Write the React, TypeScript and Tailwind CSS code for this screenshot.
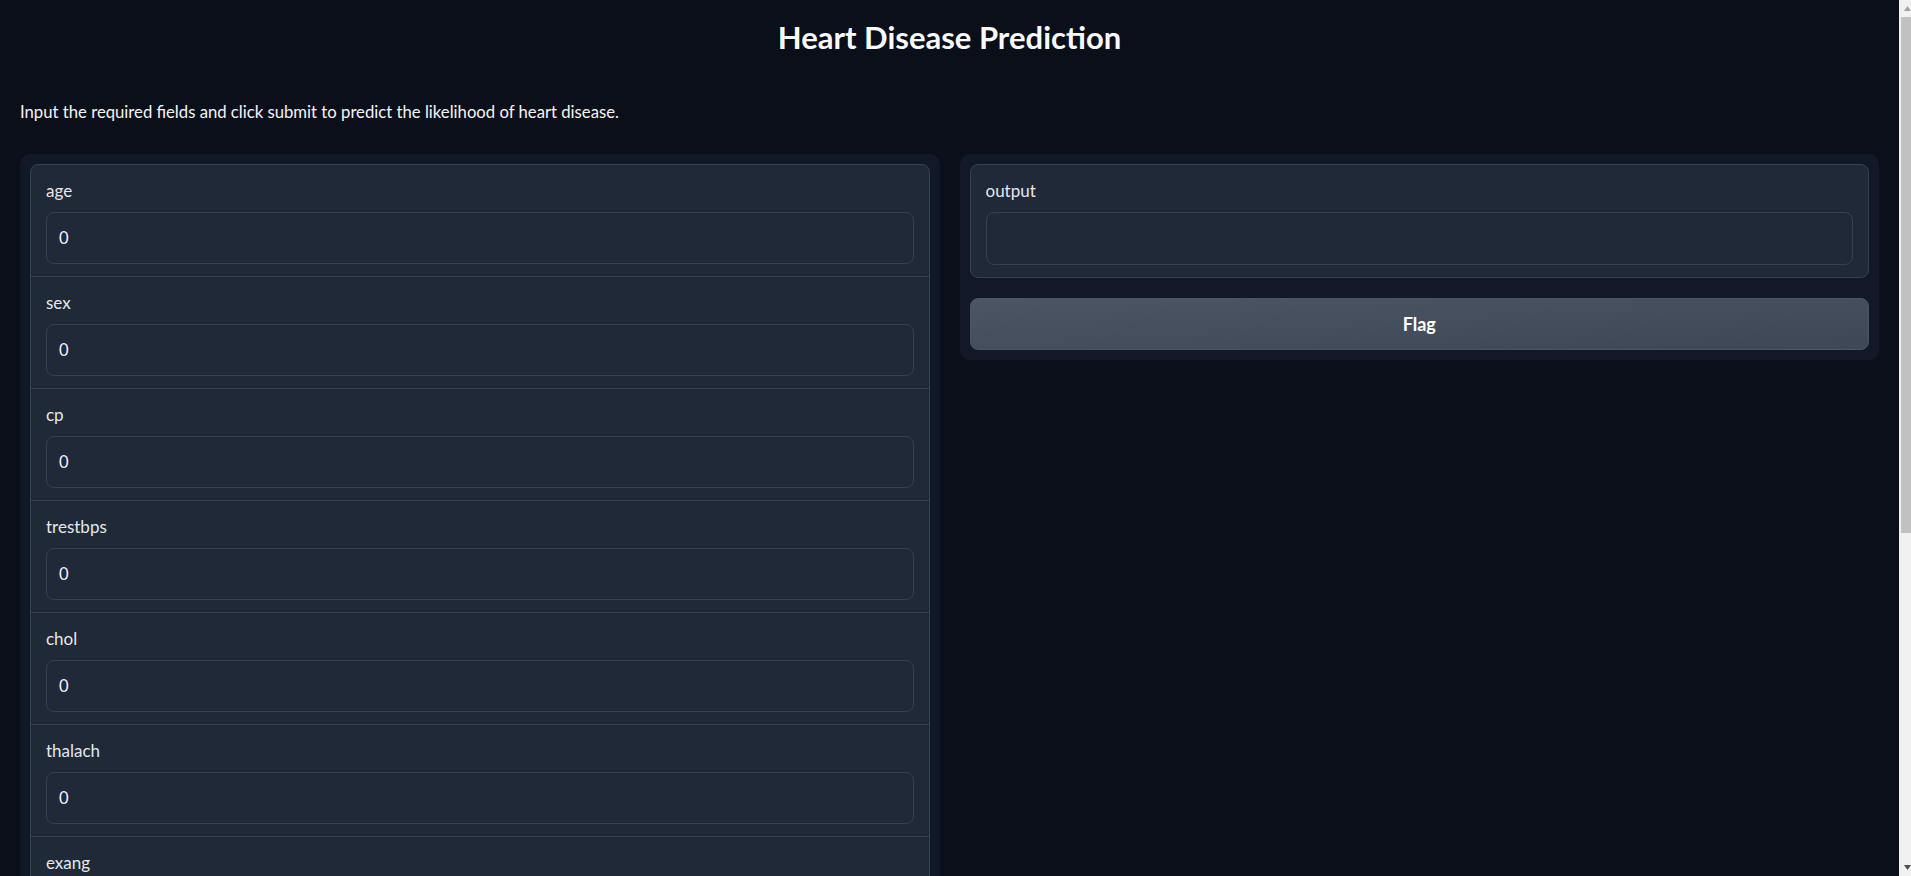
import { useState } from "react"

const FIELDS = ["age", "sex", "cp", "trestbps", "chol", "thalach", "exang", "oldpeak", "slope", "ca"]

function NumberField({ label }: { label: string }) {
  const [value, setValue] = useState("0")
  return (
    <label className="flex flex-col bg-[#1f2937] px-[15px] pt-[14px] pb-[12px]">
      <span className="mb-[9px] text-[17px] leading-6 text-[#e5e7eb]">{label}</span>
      <input
        type="number"
        value={value}
        onChange={(e) => setValue(e.target.value)}
        className="h-[52px] w-full rounded-lg border border-[#374151] bg-[#1f2937] px-3 text-[16.5px] text-[#f3f4f6] outline-none focus:border-[#4b5563] [appearance:textfield] [&::-webkit-inner-spin-button]:appearance-none"
      />
    </label>
  )
}

function Scrollbar() {
  return (
    <div className="flex w-[12px] shrink-0 flex-col bg-[#f1f1f1]">
      <div className="flex h-[17px] items-center justify-end">
        <svg width="7" height="5" viewBox="0 0 7 5">
          <path d="M0 5 L3.5 0 L7 5 Z" fill="#a3a3a3" />
        </svg>
      </div>
      <div className="flex-1">
        <div className="ml-[2px] h-[516px] bg-[#c1c1c1]" />
      </div>
      <div className="flex h-[17px] items-center justify-end">
        <svg width="7" height="5" viewBox="0 0 7 5">
          <path d="M0 0 L7 0 L3.5 5 Z" fill="#505050" />
        </svg>
      </div>
    </div>
  )
}

export default function App() {
  return (
    <div className="flex h-screen bg-[#0b0f19] font-[Lato,sans-serif]">
      <div className="flex-1 overflow-y-auto [scrollbar-width:none]">
        <main className="px-5 pb-10">
          <h1 className="pt-[17px] text-center text-[31px] font-bold leading-10 text-[#f9fafb]">
            Heart Disease Prediction
          </h1>
          <p className="mt-[43px] text-[16.7px] leading-6 text-[#f3f4f6]">
            Input the required fields and click submit to predict the likelihood of heart disease.
          </p>

          <div className="mt-[30px] flex items-start gap-5">
            {/* inputs */}
            <div className="flex flex-1 flex-col gap-5 rounded-[10px] bg-[#111827] p-[10px]">
              <div className="flex flex-col gap-px overflow-hidden rounded-lg border border-[#374151] bg-[#374151]">
                {FIELDS.map((f) => (
                  <NumberField key={f} label={f} />
                ))}
              </div>
              <div className="flex gap-4">
                <button className="h-[52px] flex-1 rounded-lg border border-[#4b5563] bg-gradient-to-br from-[#4b5563] to-[#3f4756] text-[18px] font-bold text-white">
                  Clear
                </button>
                <button className="h-[52px] flex-1 rounded-lg border border-[#f97316] bg-gradient-to-br from-[#f97316] to-[#c2410c] text-[18px] font-bold text-white">
                  Submit
                </button>
              </div>
            </div>

            {/* output */}
            <div className="flex flex-1 flex-col gap-5 rounded-[10px] bg-[#111827] p-[10px]">
              <div className="flex flex-col rounded-lg border border-[#374151] bg-[#1f2937] px-[15px] pt-[14px] pb-[12px]">
                <span className="mb-[9px] text-[17px] leading-6 text-[#e5e7eb]">output</span>
                <textarea
                  readOnly
                  rows={1}
                  className="h-[53px] w-full resize-none rounded-lg border border-[#374151] bg-[#1f2937] px-3 py-[14px] text-[16.5px] text-[#f3f4f6] outline-none"
                />
              </div>
              <button className="h-[52px] w-full rounded-lg border border-[#4b5563] bg-gradient-to-br from-[#4b5563] to-[#3f4756] text-[18px] font-bold text-white">
                Flag
              </button>
            </div>
          </div>

          <footer className="mt-10 flex justify-center gap-2 text-sm text-[#9ca3af]">
            <span>Use via API</span>
            <span>·</span>
            <span>Built with Gradio</span>
          </footer>
        </main>
      </div>
      <Scrollbar />
    </div>
  )
}
